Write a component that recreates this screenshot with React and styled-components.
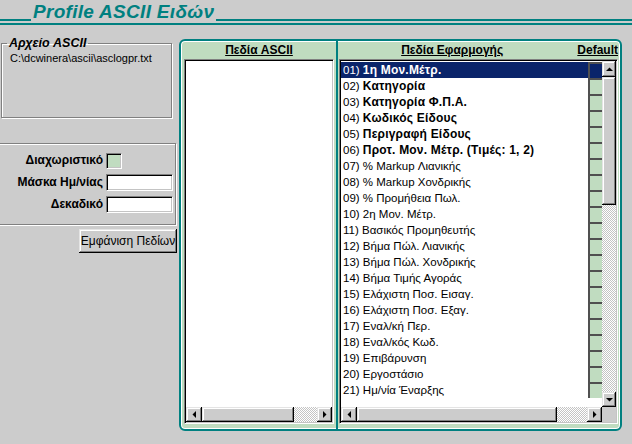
import React from "react";
import styled, { createGlobalStyle, css } from "styled-components";

const GlobalStyle = createGlobalStyle`
  html, body {
    margin: 0;
    padding: 0;
    background: #cccccc;
  }
  body {
    width: 632px;
    height: 444px;
    overflow: hidden;
    font-family: "Liberation Sans", Arial, sans-serif;
  }
`;

const TEAL = "#008080";
const MINT = "#c0dcc0";
const FACE = "#cccccc";

const raised = css`
  background: ${FACE};
  box-shadow: inset -1px -1px #000, inset 1px 1px #e4e4e4,
    inset -2px -2px #808080, inset 2px 2px #fff;
`;

const checker = css`
  background: repeating-conic-gradient(#c4c4c4 0% 25%, #ffffff 0% 50%) 0 0 / 2px 2px;
`;

const sunken = css`
  box-sizing: border-box;
  border: 1px solid;
  border-color: #808080 #fff #fff #808080;
  box-shadow: inset 1px 1px #000, inset -1px -1px #c4c4c4;
`;

const Screen = styled.div`
  width: 632px;
  height: 444px;
  display: flex;
  flex-direction: column;
`;

/* ---- title ---- */
const TitleRow = styled.div`
  display: flex;
  align-items: flex-end;
  height: 21px;
`;

const Rule = styled.div`
  height: 2px;
  background: ${TEAL};
  flex: ${({ w }) => (w ? `0 0 ${w}px` : "1")};
`;

const Title = styled.h1`
  margin: 0 2px -1px 2px;
  font: italic bold 19px/20px "Liberation Sans", Arial, sans-serif;
  letter-spacing: 0.3px;
  color: ${TEAL};
  white-space: nowrap;
`;

const FullRule = styled.div`
  margin-top: 2px;
  height: 2px;
  background: ${TEAL};
`;

const Body = styled.div`
  display: flex;
  flex: 1;
`;

/* ---- left side ---- */
const Side = styled.div`
  width: 179px;
  display: flex;
  flex-direction: column;
`;

const Group = styled.fieldset`
  box-sizing: border-box;
  margin: ${({ m }) => m};
  width: ${({ w }) => w}px;
  padding: ${({ p }) => p};
  border: 1px solid #808080;
  box-shadow: inset 1px 1px #fff, 1px 1px #fff;
  min-inline-size: 0;
`;

const Legend = styled.legend`
  padding: 0 2px;
  margin-left: -3px;
  font: italic bold 12.5px/14px "Liberation Sans", Arial, sans-serif;
  color: #000;
`;

const PathText = styled.div`
  min-height: 65px;
  padding-top: 2px;
  font-size: 11px;
  line-height: 13px;
  color: #000;
`;

const FormGrid = styled.div`
  display: grid;
  grid-template-columns: 104px 67px;
  grid-auto-rows: 17px;
  column-gap: 3px;
  row-gap: 5px;
  align-items: center;
`;

const Label = styled.label`
  text-align: right;
  font: bold 12px/17px "Liberation Sans", Arial, sans-serif;
  color: #000;
  white-space: nowrap;
`;

const Field = styled.div`
  ${sunken};
  height: ${({ h }) => h || 17}px;
  width: ${({ w }) => w || 67}px;
  background: ${({ tint }) => tint || "#fff"};
`;

const Button = styled.button`
  ${raised};
  align-self: flex-end;
  margin: 4px 2px 0 0;
  width: 98px;
  height: 24px;
  border: 0;
  padding: 0;
  font: 12px "Liberation Sans", Arial, sans-serif;
  color: #000;
`;

/* ---- main panel ---- */
const Panel = styled.div`
  box-sizing: border-box;
  margin-top: 14px;
  width: 443px;
  height: 392px;
  border: 2px solid ${TEAL};
  border-radius: 6px;
  background: ${MINT};
  box-shadow: inset 0 0 0 1px #fff;
  display: grid;
  grid-template-columns: 155px 1fr;
  overflow: hidden;
`;

const Column = styled.div`
  display: flex;
  flex-direction: column;
  border-left: ${({ divided }) => (divided ? `2px solid ${TEAL}` : "0")};
  padding: ${({ pad }) => pad};
`;

const Header = styled.div`
  height: 18px;
  display: grid;
  grid-template-columns: 1fr auto;
  align-items: center;
  font: bold 12px/18px "Liberation Sans", Arial, sans-serif;
  color: #000;
`;

const HeaderText = styled.span`
  text-decoration: underline;
  text-align: ${({ align }) => align || "center"};
  padding-right: ${({ pr }) => pr || 0}px;
`;

const ListFrame = styled.div`
  ${sunken};
  height: 365px;
  padding: 1px;
  background: #fff;
  display: grid;
  grid-template-columns: ${({ vscroll }) => (vscroll ? "1fr 14px" : "1fr")};
  grid-template-rows: 1fr 15px;
`;

const Rows = styled.div`
  padding-top: 1px;
  overflow: hidden;
`;

const Row = styled.div`
  display: flex;
  height: 16px;
  background: ${({ selected }) => (selected ? "#0a246a" : "transparent")};
  color: ${({ selected }) => (selected ? "#fff" : "#000")};
`;

const RowText = styled.div`
  flex: 1;
  padding-left: 2px;
  font: 11.5px/16px "Liberation Sans", Arial, sans-serif;
  white-space: nowrap;
  overflow: hidden;
`;

const Strong = styled.b`
  font-weight: bold;
  font-size: 12px;
  letter-spacing: 0.2px;
`;

const Cell = styled.div`
  box-sizing: border-box;
  width: 14px;
  border-top: 2px solid #505050;
  border-left: 2px solid #505050;
  background: ${({ selected }) => (selected ? "#0a246a" : MINT)};
`;

const VScroll = styled.div`
  display: flex;
  flex-direction: column;
`;

const HScroll = styled.div`
  display: flex;
`;

const ArrowBtn = styled.div`
  ${raised};
  flex: 0 0 ${({ size }) => size}px;
  display: flex;
  align-items: center;
  justify-content: center;
`;

const Thumb = styled.div`
  ${raised};
  flex: 0 0 ${({ size }) => size}px;
`;

const Track = styled.div`
  ${checker};
  flex: 1;
`;

const Corner = styled.div`
  background: ${FACE};
`;

const Arrow = ({ dir }) => {
  const pts = {
    up: "0,4 7,4 3.5,0.5",
    down: "0,0 7,0 3.5,3.5",
    left: "4,0 4,7 0.5,3.5",
    right: "0,0 0,7 3.5,3.5",
  }[dir];
  const vertical = dir === "up" || dir === "down";
  return (
    <svg width={vertical ? 7 : 4} height={vertical ? 4 : 7} viewBox={vertical ? "0 0 7 4" : "0 0 4 7"}>
      <polygon points={pts} fill="#000" />
    </svg>
  );
};

const fields = [
  ["01)", "1η Μον.Μέτρ.", true],
  ["02)", "Κατηγορία", true],
  ["03)", "Κατηγορία Φ.Π.Α.", true],
  ["04)", "Κωδικός Είδους", true],
  ["05)", "Περιγραφή Είδους", true],
  ["06)", "Προτ. Μον. Μέτρ. (Τιμές: 1, 2)", true],
  ["07)", "% Markup Λιανικής"],
  ["08)", "% Markup Χονδρικής"],
  ["09)", "% Προμήθεια Πωλ."],
  ["10)", "2η Μον. Μέτρ."],
  ["11)", "Βασικός Προμηθευτής"],
  ["12)", "Βήμα Πώλ. Λιανικής"],
  ["13)", "Βήμα Πώλ. Χονδρικής"],
  ["14)", "Βήμα Τιμής Αγοράς"],
  ["15)", "Ελάχιστη Ποσ. Εισαγ."],
  ["16)", "Ελάχιστη Ποσ. Εξαγ."],
  ["17)", "Εναλ/κή Περ."],
  ["18)", "Εναλ/κός Κωδ."],
  ["19)", "Επιβάρυνση"],
  ["20)", "Εργοστάσιο"],
  ["21)", "Ημ/νία Έναρξης"],
];

const App = () => (
  <Screen>
    <GlobalStyle />
    <TitleRow>
      <Rule w={31} />
      <Title>Profile ASCII Ειδών</Title>
      <Rule />
    </TitleRow>
    <FullRule />

    <Body>
      <Side>
        <Group m="11px 0 0 1px" w={171} p="0 8px">
          <Legend>Αρχείο ASCII</Legend>
          <PathText>C:\dcwinera\ascii\asclogpr.txt</PathText>
        </Group>

        <Group m="25px 0 0 -2px" w={178} p="8px 0 11px 0">
          <FormGrid>
            <Label>Διαχωριστικό</Label>
            <Field w={16} h={16} tint={MINT} />
            <Label>Μάσκα Ημ/νίας</Label>
            <Field />
            <Label>Δεκαδικό</Label>
            <Field />
          </FormGrid>
        </Group>

        <Button>Εμφάνιση Πεδίων</Button>
      </Side>

      <Panel>
        <Column pad="0 2px 0 3px">
          <Header>
            <HeaderText>Πεδία ASCII</HeaderText>
          </Header>
          <ListFrame>
            <div />
            <HScroll>
              <ArrowBtn size={16}>
                <Arrow dir="left" />
              </ArrowBtn>
              <Thumb size={92} />
              <Track />
              <ArrowBtn size={15}>
                <Arrow dir="right" />
              </ArrowBtn>
            </HScroll>
          </ListFrame>
        </Column>

        <Column divided pad="0 2px 0 1px">
          <Header>
            <HeaderText pr={12}>Πεδία Εφαρμογής</HeaderText>
            <HeaderText>Default</HeaderText>
          </Header>
          <ListFrame vscroll>
            <Rows>
              {fields.map(([num, name, bold], i) => (
                <Row key={num} selected={i === 0}>
                  <RowText>
                    {num} {bold ? <Strong>{name}</Strong> : name}
                  </RowText>
                  <Cell selected={i === 0} />
                </Row>
              ))}
            </Rows>
            <VScroll>
              <ArrowBtn size={16}>
                <Arrow dir="up" />
              </ArrowBtn>
              <Thumb size={128} />
              <Track />
              <ArrowBtn size={15}>
                <Arrow dir="down" />
              </ArrowBtn>
            </VScroll>
            <HScroll>
              <ArrowBtn size={16}>
                <Arrow dir="left" />
              </ArrowBtn>
              <Thumb size={200} />
              <Track />
              <ArrowBtn size={15}>
                <Arrow dir="right" />
              </ArrowBtn>
            </HScroll>
            <Corner />
          </ListFrame>
        </Column>
      </Panel>
    </Body>
  </Screen>
);

export default App;
